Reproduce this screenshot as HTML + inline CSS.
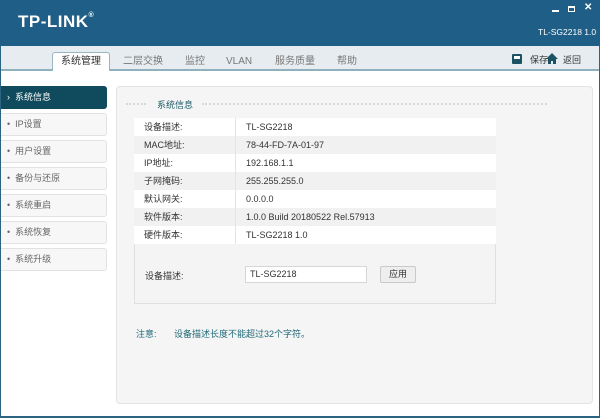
<!DOCTYPE html><html><head><meta charset="utf-8"><style>
*{margin:0;padding:0;box-sizing:border-box}
body{width:600px;height:418px;overflow:hidden;background:#fff;font-family:"Liberation Sans","Noto Sans CJK SC",sans-serif;font-size:9px;color:#333;position:relative;white-space:nowrap}
.a{position:absolute}
.hdr{left:0;top:0;width:600px;height:46px;background:#1f5e86}
.logo{left:18px;top:12px;color:#fff;font-weight:bold;font-size:17px;letter-spacing:0.5px}
.tabs{left:0;top:46px;width:600px;height:25px;background:#e6ecf0;border-bottom:2px solid #8fb0bd}
.tab{top:55px;font-size:10px;line-height:14px;color:#777}
.side{left:0;width:107px;height:23px;background:#f7f7f7;border:1px solid #e2e2e2;border-left:none;border-radius:0 3px 3px 0;padding-left:7px;line-height:21px;color:#666}
.row{left:134px;width:362px;height:18px;line-height:18px}
.row span{position:absolute}
</style></head><body>
<div class="a hdr"></div>
<div class="a logo">TP-LINK<span style="font-size:7px;vertical-align:top">®</span></div>
<div class="a" style="left:552px;top:10px;width:7px;height:2px;background:#fff"></div>
<div class="a" style="left:568px;top:6px;width:7px;height:6px;border:1.5px solid #fff;border-top-width:2.5px"></div>
<div class="a" style="left:584px;top:2px;color:#fff;font-size:10px;font-weight:bold">✕</div>
<div class="a" style="left:538px;top:27px;color:#fff;font-size:8.5px">TL-SG2218 1.0</div>
<div class="a tabs"></div>
<div class="a" style="left:52px;top:52px;width:58px;height:19px;background:#fff;border:1px solid #9ab6c2;border-bottom:none;border-radius:3px 3px 0 0"></div>
<div class="a tab" style="left:61px;color:#333">系统管理</div>
<div class="a tab" style="left:123px">二层交换</div>
<div class="a tab" style="left:185px">监控</div>
<div class="a tab" style="left:226px">VLAN</div>
<div class="a tab" style="left:275px">服务质量</div>
<div class="a tab" style="left:337px">帮助</div>
<div class="a" style="left:512px;top:54px;width:10px;height:10px;background:#1b5264;border-radius:1px"><div style="margin:2px 2px;width:6px;height:3px;background:#fff"></div></div>
<div class="a" style="left:530px;top:53px">保存</div>
<svg class="a" style="left:546px;top:53px" width="12" height="11"><path d="M6 0L0 6H2V11H5V8H7V11H10V6H12Z" fill="#1b5264"/></svg>
<div class="a" style="left:563px;top:53px">返回</div>
<div class="a side" style="top:86px;background:#0f4b5c;border-color:#0f4b5c;color:#fff">›&nbsp; 系统信息</div>
<div class="a side" style="top:113px">•&nbsp; IP设置</div>
<div class="a side" style="top:140px">•&nbsp; 用户设置</div>
<div class="a side" style="top:167px">•&nbsp; 备份与还原</div>
<div class="a side" style="top:194px">•&nbsp; 系统重启</div>
<div class="a side" style="top:221px">•&nbsp; 系统恢复</div>
<div class="a side" style="top:248px">•&nbsp; 系统升级</div>
<div class="a" style="left:116px;top:86px;width:477px;height:318px;background:#f5f5f5;border:1px solid #e3e3e3;border-radius:4px"></div>
<div class="a" style="left:126px;top:103px;width:20px;height:3px;border-top:2px dotted #d5d9dd"></div>
<div class="a" style="left:157px;top:98px;color:#1c5a68">系统信息</div>
<div class="a" style="left:202px;top:103px;width:345px;height:3px;border-top:2px dotted #d5d9dd"></div>
<div class="a" style="left:134px;top:118px;width:362px;height:186px;border:1px solid #e0e0e0;background:#f4f4f4"></div>
<div class="a row" style="top:118px;background:#fff"><span style="left:10px">设备描述:</span><span style="left:112px">TL-SG2218</span></div>
<div class="a row" style="top:136px;background:#f1f1f1"><span style="left:10px">MAC地址:</span><span style="left:112px">78-44-FD-7A-01-97</span></div>
<div class="a row" style="top:154px;background:#fff"><span style="left:10px">IP地址:</span><span style="left:112px">192.168.1.1</span></div>
<div class="a row" style="top:172px;background:#f1f1f1"><span style="left:10px">子网掩码:</span><span style="left:112px">255.255.255.0</span></div>
<div class="a row" style="top:190px;background:#fff"><span style="left:10px">默认网关:</span><span style="left:112px">0.0.0.0</span></div>
<div class="a row" style="top:208px;background:#f1f1f1"><span style="left:10px">软件版本:</span><span style="left:112px">1.0.0 Build 20180522 Rel.57913</span></div>
<div class="a row" style="top:226px;background:#fff"><span style="left:10px">硬件版本:</span><span style="left:112px">TL-SG2218 1.0</span></div>
<div class="a" style="left:235px;top:118px;width:1px;height:126px;background:#e4e4e4"></div>
<div class="a" style="left:145px;top:269px">设备描述:</div>
<div class="a" style="left:245px;top:266px;width:122px;height:17px;background:#fff;border:1px solid #d6d6d6;padding-left:4px;line-height:15px">TL-SG2218</div>
<div class="a" style="left:380px;top:266px;width:36px;height:17px;background:#eee;border:1px solid #c9c9c9;border-radius:2px;text-align:center;line-height:15px">应用</div>
<div class="a" style="left:136px;top:327px;color:#1f6a78">注意:&nbsp;&nbsp;&nbsp;&nbsp;&nbsp;&nbsp; 设备描述长度不能超过32个字符。</div>
<div class="a" style="left:0;top:46px;width:1px;height:372px;background:#2a6482"></div>
<div class="a" style="left:599px;top:46px;width:1px;height:372px;background:#2a6482"></div>
<div class="a" style="left:0;top:416px;width:600px;height:2px;background:#2a6482"></div>
</body></html>
